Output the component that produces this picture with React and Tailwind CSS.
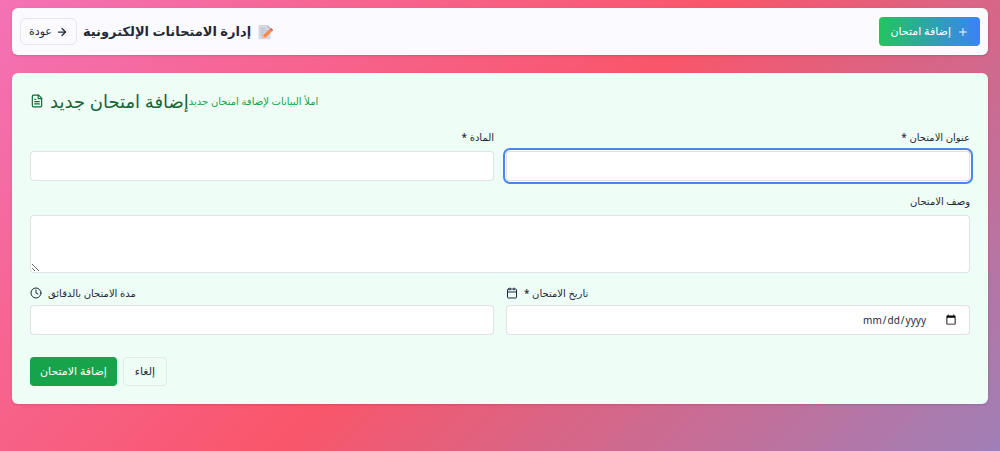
import React, { useState } from 'react';
import { ArrowRight, Calendar, Clock, FileText, Plus } from 'lucide-react';

const MemoIcon = () => (
  <svg viewBox="0 0 16 16" className="h-4 w-4 shrink-0" aria-hidden="true">
    <path d="M1.5 1h9.2L13.5 4v11.2h-12z" fill="#d5d8e3" />
    <path d="M10.7 1v3h2.8z" fill="#b4b9c8" />
    <path d="M3.5 4.5h5M3.5 6.7h7M3.5 8.9h4M3.5 11.1h2.5" stroke="#b6bccb" strokeWidth="0.9" />
    <path d="M12.2 5.4l2.6 2.2-6.3 6.2-2.7-2.2z" fill="#f98a4c" />
    <path d="M12.2 5.4l1-1a1.2 1.2 0 0 1 1.6 0l.8.8a1.2 1.2 0 0 1 0 1.6l-.8.8z" fill="#ee5a5f" />
    <path d="M5.8 11.6l2.7 2.2-3.6 1.1z" fill="#f6b98b" />
  </svg>
);

const inputClass =
  'h-[30px] w-full rounded border border-gray-300/70 bg-white/90 px-2.5 text-[10px] text-gray-800 outline-none';
const labelClass = 'text-[10px] leading-4 font-medium text-gray-800';

// keeps the date text next to the picker icon
const dateClass =
  '[&::-webkit-datetime-edit]:flex [&::-webkit-datetime-edit]:justify-end [&::-webkit-datetime-edit-fields-wrapper]:flex [&::-webkit-datetime-edit-fields-wrapper]:justify-end [&::-webkit-calendar-picker-indicator]:ml-4 [&::-webkit-calendar-picker-indicator]:h-3 [&::-webkit-calendar-picker-indicator]:w-3';

const App = () => {
  const [formData, setFormData] = useState({
    title: '',
    subject: '',
    description: '',
    date: '',
    duration: ''
  });

  const handleInputChange = (e) => {
    const { name, value } = e.target;
    setFormData(prev => ({
      ...prev,
      [name]: value
    }));
  };

  const handleSubmit = (e) => {
    e.preventDefault();
  };

  return (
    <div
      dir="rtl"
      className="min-h-screen bg-[linear-gradient(135deg,#f472b6_0%,#f9566a_50%,#9f80b8_100%)] px-3 pt-2 pb-12 font-['Noto_Sans','DejaVu_Sans',sans-serif]"
    >
      <header className="flex h-[47px] items-center justify-between rounded-md bg-[#fbfbff] px-2 shadow">
        <button
          type="button"
          className="flex h-[29px] items-center gap-1.5 rounded bg-[linear-gradient(to_left,#3b82f6,#22c55e)] px-[11px] text-[11px] font-medium text-white"
        >
          <Plus className="h-3 w-3" />
          إضافة امتحان
        </button>
        <div className="flex items-center gap-1.5">
          <h1 className="flex items-center gap-1.5 text-[13px] font-bold text-gray-800">
            <MemoIcon />
            إدارة الامتحانات الإلكترونية
          </h1>
          <button
            type="button"
            className="flex h-[27px] items-center gap-1 rounded-md border border-gray-200 px-2 text-[11px] text-gray-800"
          >
            <ArrowRight className="h-3 w-3" strokeWidth={2.5} />
            عودة
          </button>
        </div>
      </header>

      <form
        onSubmit={handleSubmit}
        className="mt-[18px] rounded-md bg-[#eefdf5] p-[18px] shadow"
      >
        <div className="flex items-center justify-end">
          <p className="text-[10px] text-[#16a34a]">املأ البيانات لإضافة امتحان جديد</p>
          <h2 className="flex items-center gap-1.5 text-lg leading-5 text-[#166534]">
            إضافة امتحان جديد
            <FileText className="h-3.5 w-3.5" />
          </h2>
        </div>

        <div className="mt-[18px] grid grid-cols-2 gap-3">
          <div className="flex flex-col gap-1.5">
            <label htmlFor="title" className={labelClass}>عنوان الامتحان *</label>
            <input
              id="title"
              name="title"
              value={formData.title}
              onChange={handleInputChange}
              className={`${inputClass} ring-2 ring-[#4a85ee] ring-offset-1`}
            />
          </div>
          <div className="flex flex-col gap-1.5">
            <label htmlFor="subject" className={labelClass}>المادة *</label>
            <input id="subject" name="subject" value={formData.subject} onChange={handleInputChange} className={inputClass} />
          </div>
          <div className="col-span-2 flex flex-col gap-1.5">
            <label htmlFor="description" className={labelClass}>وصف الامتحان</label>
            <textarea
              id="description"
              name="description"
              value={formData.description}
              onChange={handleInputChange}
              className="h-[58px] w-full rounded border border-gray-300/70 bg-white/90 px-2.5 py-2 text-[10px] outline-none"
            />
          </div>
          <div className="flex flex-col gap-1">
            <label htmlFor="date" className={`${labelClass} flex items-center justify-end gap-1.5`}>
              تاريخ الامتحان *
              <Calendar className="h-3 w-3" />
            </label>
            <input
              id="date"
              name="date"
              type="date"
              dir="ltr"
              value={formData.date}
              onChange={handleInputChange}
              className={`${inputClass} ${dateClass}`}
            />
          </div>
          <div className="flex flex-col gap-1">
            <label htmlFor="duration" className={`${labelClass} flex items-center justify-end gap-1.5`}>
              مدة الامتحان بالدقائق
              <Clock className="h-3 w-3" />
            </label>
            <input id="duration" name="duration" value={formData.duration} onChange={handleInputChange} className={inputClass} />
          </div>
        </div>

        <div className="mt-[22px] flex justify-end gap-1.5">
          <button type="button" className="h-[29px] rounded border border-gray-200 px-[11px] text-[11px] text-gray-800">
            إلغاء
          </button>
          <button type="submit" className="h-[29px] rounded bg-[#16a34a] px-2.5 text-[11px] font-medium text-white">
            إضافة الامتحان
          </button>
        </div>
      </form>
    </div>
  );
};

export default App;
